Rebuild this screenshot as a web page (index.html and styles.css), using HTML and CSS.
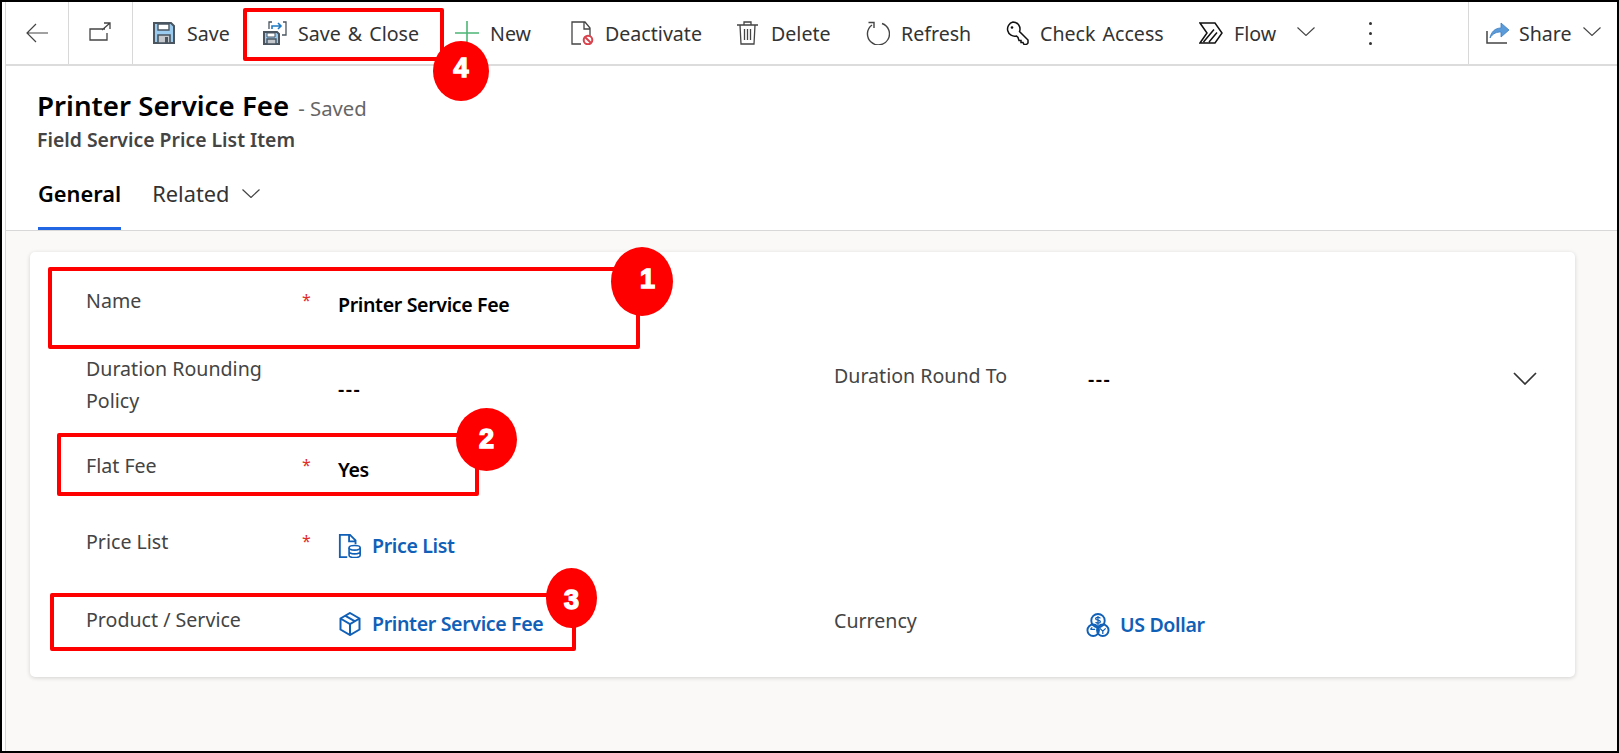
FILE: index.html
```html
<!DOCTYPE html>
<html lang="en">
  <head>
    <meta charset="UTF-8" />
    <title>Printer Service Fee - Field Service Price List Item</title>
    <link rel="stylesheet" href="styles.css">
  </head>
  <body>
    <div class="frame">
      <div class="app">
        <div class="toolbar">
          <button class="cmd cmd-nav">
            <svg class="icon" viewBox="0 0 24 24"><path d="M2 12h21M11 3l-9 9 9 9" fill="none" stroke="#444" stroke-width="1.2"/></svg>
          </button>
          <button class="cmd cmd-nav">
            <svg class="icon" viewBox="0 0 24 24"><path d="M16 8H1v11h17v-7M13 9l8-7M15 2h6v6" fill="none" stroke="#444" stroke-width="1.3"/></svg>
          </button>
          <button class="cmd cmd-first">
            <svg class="icon" viewBox="0 0 24 24"><path d="M2 2h17l3 3v17H2z" fill="#9ccbf0" stroke="#4a5560" stroke-width="2"/><path d="M6 3h11v6H6z" fill="#fff" stroke="#4a5560" stroke-width="1.4"/><path d="M6 22v-8h12v8z" fill="#c4c8cc" stroke="#4a5560" stroke-width="1.6"/><path d="M13 16h3v6h-3z" fill="#4a5560"/></svg>
            <span>Save</span>
          </button>
          <button class="cmd">
            <svg class="icon" viewBox="0 0 24 24"><path d="M1 11h13l2 2v10H1z" fill="#9ccbf0" stroke="#4a5560" stroke-width="2"/><path d="M4 12h8v4H4z" fill="#fff" stroke="#4a5560"/><path d="M4 23v-5h9v5z" fill="#c4c8cc" stroke="#4a5560" stroke-width="1.4"/><path d="M6 8V1h3M20 1h3v13h-4" fill="none" stroke="#4a5560" stroke-width="1.3"/><path d="M9 8V5h9M15 2l3 3-3 3" fill="none" stroke="#1f7ac4" stroke-width="1.6"/></svg>
            <span>Save &amp; Close</span>
          </button>
          <button class="cmd">
            <svg class="icon" viewBox="0 0 24 24"><path d="M12 0v24M0 12h24" fill="none" stroke="#4cb676" stroke-width="1.6"/></svg>
            <span>New</span>
          </button>
          <button class="cmd">
            <svg class="icon" viewBox="0 0 24 24"><path d="M11 23H2V1h13l5 6v8M14 1v7h6" fill="none" stroke="#444" stroke-width="1.3"/><circle cx="18" cy="19" r="4.3" fill="#fff" stroke="#d9434e" stroke-width="2"/><path d="M15 16l6 6" stroke="#d9434e" stroke-width="2"/></svg>
            <span>Deactivate</span>
          </button>
          <button class="cmd">
            <svg class="icon" viewBox="0 0 24 24"><path d="M1 4h21M8 4V1h7v3M4 4l1 19h13l1-19M8.500 8v11M11.500 8v11M14.500 8v11" fill="none" stroke="#444" stroke-width="1.3"/></svg>
            <span>Delete</span>
          </button>
          <button class="cmd">
            <svg class="icon" viewBox="0 0 24 24"><path d="M16 2.500a11 11 0 1 1-10 1.500" fill="none" stroke="#444" stroke-width="1.4"/><path d="M1.500 2.500H7V8" fill="none" stroke="#444" stroke-width="1.4" transform="translate(1 -1)"/></svg>
            <span>Refresh</span>
          </button>
          <button class="cmd">
            <svg class="icon" viewBox="0 0 24 24"><path d="M8 1a7 7 0 0 1 6.500 9.500l8.500 8.500v3l-1.500 1.500H19l-1-2h-2v-2h-2l-1-3-1.500-1.500A7 7 0 1 1 8 1z" fill="none" stroke="#111" stroke-width="1.5"/><circle cx="7" cy="6.500" r="1.300" fill="#111"/></svg>
            <span>Check Access</span>
          </button>
          <button class="cmd">
            <svg class="icon" viewBox="0 0 24 24"><path d="M1 2h15l7 10-7 10H1l7-10zM4.500 21L15 8.500M10 21l8-9.500" fill="none" stroke="#111" stroke-width="1.5"/></svg>
            <span>Flow</span>
            <svg class="chevron chevron-flow" viewBox="0 0 18 9"><path d="M.500.500L9 8.500 17.500.500" fill="none" stroke="#444" stroke-width="1.100"/></svg>
          </button>
          <button class="cmd cmd-more">
            <span class="dot"></span><span class="dot"></span><span class="dot"></span>
          </button>
          <button class="cmd cmd-share">
            <svg class="icon" viewBox="0 0 24 24"><path d="M1 10v12h20" fill="none" stroke="#444" stroke-width="1.5"/><path d="M4 17c1-6 5-10 11-10V2l8 7-8 7v-5c-4 0-8 1-11 6z" fill="#5b9bd9" stroke="#3d7fc0" stroke-width=".8"/></svg>
            <span>Share</span>
            <svg class="chevron chevron-share" viewBox="0 0 18 9"><path d="M.500.500L9 8.500 17.500.500" fill="none" stroke="#444" stroke-width="1.100"/></svg>
          </button>
        </div>

        <div class="record-header">
          <div class="record-title">
            <h1>Printer Service Fee</h1>
            <span class="record-status">- Saved</span>
          </div>
          <div class="record-type">Field Service Price List Item</div>
          <div class="tabs">
            <div class="tab tab-active">General</div>
            <div class="tab">
              Related
              <svg class="chevron" viewBox="0 0 18 9"><path d="M.500.500L9 8.500 17.500.500" fill="none" stroke="#444" stroke-width="1.200"/></svg>
            </div>
          </div>
        </div>

        <div class="content">
          <div class="card">
            <div class="field">
              <div class="label">Name</div>
              <div class="required">*</div>
              <div class="value">Printer Service Fee</div>
            </div>
            <div class="field"></div>

            <div class="field">
              <div class="label">Duration Rounding<br>Policy</div>
              <div class="required"></div>
              <div class="value value-mid value-dash">---</div>
            </div>
            <div class="field field-round">
              <div class="label">Duration Round To</div>
              <div class="required"></div>
              <div class="value value-select">
                <span class="value-dash">---</span>
                <svg class="chevron-select" viewBox="0 0 24 13"><path d="M1 1l11 11L23 1" fill="none" stroke="#333" stroke-width="1.700"/></svg>
              </div>
            </div>

            <div class="field">
              <div class="label">Flat Fee</div>
              <div class="required">*</div>
              <div class="value">Yes</div>
            </div>
            <div class="field"></div>

            <div class="field">
              <div class="label">Price List</div>
              <div class="required">*</div>
              <div class="value value-link">
                <svg class="link-icon" viewBox="0 0 24 26"><path d="M9 25H1V1h11l6 6v4M11 1v7h7" fill="none" stroke="#1160b7" stroke-width="2"/><ellipse cx="17" cy="15" rx="6" ry="2.500" fill="#fff" stroke="#1160b7" stroke-width="1.800"/><path d="M11 15v8c0 1.500 2.500 2.500 6 2.500s6-1 6-2.500v-8M11 19c0 1.500 2.500 2.500 6 2.500s6-1 6-2.500" fill="none" stroke="#1160b7" stroke-width="1.800"/></svg>
                <span>Price List</span>
              </div>
            </div>
            <div class="field"></div>

            <div class="field">
              <div class="label">Product / Service</div>
              <div class="required"></div>
              <div class="value value-link">
                <svg class="link-icon" viewBox="0 0 24 24"><path d="M12 1l9.500 5.500v11L12 23l-9.500-5.500v-11zM2.500 6.500L12 12l9.500-5.500M12 12v11M7.500 3.800l9.500 5.500" fill="none" stroke="#1160b7" stroke-width="2"/></svg>
                <span>Printer Service Fee</span>
              </div>
            </div>
            <div class="field field-currency">
              <div class="label">Currency</div>
              <div class="required"></div>
              <div class="value value-link">
                <svg class="link-icon" viewBox="0 0 24 25"><circle cx="12" cy="8" r="7" fill="none" stroke="#1160b7" stroke-width="2"/><circle cx="7" cy="18" r="6" fill="none" stroke="#1160b7" stroke-width="2"/><circle cx="17" cy="18" r="6" fill="none" stroke="#1160b7" stroke-width="2"/><path d="M14.500 5.500c-1-1.500-5-1.500-5 .5s5 1 5 3-4 2-5 .5M12 3v9.500M4 17h5M4 17l2-2M20 16l-3 3-3-3M17 19v3" fill="none" stroke="#1160b7" stroke-width="1.300"/></svg>
                <span>US Dollar</span>
              </div>
            </div>
          </div>
        </div>
      </div>

      <!-- callouts drawn over the screenshot -->
      <div class="callout-box box-1"></div>
      <div class="callout-box box-2"></div>
      <div class="callout-box box-3"></div>
      <div class="callout-box box-4"></div>
      <div class="callout-num num-1">1</div>
      <div class="callout-num num-2">2</div>
      <div class="callout-num num-3">3</div>
      <div class="callout-num num-4">4</div>
    </div>
  </body>
</html>
```

FILE: styles.css
```css
* {
  box-sizing: border-box;
}
body {
  margin: 0;
  font-family: "Noto Sans", "Open Sans", Arial, sans-serif;
  font-size: 19.6px;
  color: #333;
}
.frame {
  position: relative;
  width: 1619px;
  height: 753px;
  overflow: hidden;
  border: 2px solid #000;
  padding-left: 3px;
  background: #fff;
}
.app {
  height: 100%;
  display: flex;
  flex-direction: column;
  border-left: 1px solid #d8d8d8;
}

/* command bar */
.toolbar {
  display: grid;
  grid-template-columns: 63px 64px 130px 192px 115px 166px 130px 139px 194px 161px 1fr 149px;
  height: 64px;
  flex: none;
  border-bottom: 2px solid #dcdcdc;
}
.cmd {
  display: flex;
  align-items: center;
  gap: 11px;
  padding: 0;
  border: none;
  background: none;
  font: inherit;
  word-spacing: 2px;
  color: #333;
  white-space: nowrap;
}
.cmd-nav {
  justify-content: center;
  border-right: 1px solid #d8d8d8;
}
.cmd-first {
  padding-left: 19px;
}
.cmd-more {
  flex-direction: column;
  align-items: flex-start;
  justify-content: center;
  gap: 7px;
  padding-left: 9px;
}
.cmd-share {
  border-left: 1px solid #d8d8d8;
  padding-left: 17px;
  gap: 9px;
}
.dot {
  width: 3px;
  height: 3px;
  border-radius: 50%;
  background: #333;
}
.icon {
  width: 24px;
  height: 24px;
  flex: none;
}
.chevron {
  width: 18px;
  height: 9px;
  flex: none;
}
.chevron-flow {
  margin-left: 10px;
  margin-top: -3px;
}
.chevron-share {
  margin-left: 2px;
  margin-top: -3px;
}

/* record header */
.record-header {
  flex: none;
  height: 165px;
  padding: 20px 0 0 31px;
  border-bottom: 1px solid #d8d8d8;
}
.record-title {
  display: flex;
  align-items: baseline;
  gap: 9px;
  height: 36px;
}
.record-title h1 {
  margin: 0;
  font-size: 27.7px;
  font-weight: 600;
  color: #000;
}
.record-status {
  font-size: 20.3px;
  color: #666;
}
.record-type {
  margin-top: 5px;
  font-size: 19.4px;
  line-height: 26px;
  font-weight: 600;
  color: #444;
}
.tabs {
  display: flex;
  gap: 31px;
  margin-top: 19px;
  padding-left: 1px;
}
.tab {
  display: flex;
  align-items: center;
  gap: 13px;
  height: 58px;
  padding-bottom: 13px;
  border-bottom: 3px solid transparent;
  font-size: 21.800px;
  color: #333;
}
.tab-active {
  font-weight: 600;
  color: #000;
  border-bottom-color: #2266e3;
}

/* form */
.content {
  flex: 1;
  background: #faf9f8;
  padding: 21px 42px 0 24px;
}
.card {
  display: grid;
  grid-template-columns: 748px 1fr;
  grid-template-rows: 68px 97px 76px 78px 1fr;
  height: 425px;
  padding: 33px 0 0 56px;
  background: #fff;
  border-radius: 5px;
  box-shadow: 0 1px 4px rgba(0, 0, 0, 0.16);
}
.field {
  display: grid;
  grid-template-columns: 216px 36px 1fr;
  align-items: start;
  min-width: 0;
}
.field-round {
  padding-top: 7px;
  padding-right: 38px;
}
.field-currency {
  padding-top: 1px;
}
.label {
  line-height: 32px;
  color: #444;
}
.required {
  padding-top: 3px;
  font-size: 16px;
  line-height: 24px;
  color: #e02b2b;
}
.value {
  padding-top: 4px;
  line-height: 32px;
  font-weight: 600;
  letter-spacing: -0.37px;
  color: #000;
  white-space: nowrap;
}
.value-mid {
  padding-top: 20px;
}
.value-dash {
  letter-spacing: 1.5px;
}
.value-select {
  display: flex;
  align-items: center;
  justify-content: space-between;
  padding-top: 3px;
  padding-left: 2px;
}
.chevron-select {
  width: 24px;
  height: 13px;
  margin-top: -2px;
}
.value-link {
  display: flex;
  align-items: center;
  gap: 10px;
  color: #1160b7;
}
.link-icon {
  width: 24px;
  height: 24px;
  flex: none;
}

/* red callouts */
.callout-box {
  position: absolute;
  border: 4px solid #f00;
  border-radius: 2px;
}
.box-1 { left: 46px; top: 265px; width: 592px; height: 82px; }
.box-2 { left: 55px; top: 431px; width: 422px; height: 63px; }
.box-3 { left: 48px; top: 591px; width: 526px; height: 58px; }
.box-4 { left: 241px; top: 6px; width: 201px; height: 53px; }
.callout-num {
  position: absolute;
  display: flex;
  align-items: center;
  justify-content: center;
  border-radius: 50%;
  background: #f00;
  color: #fff;
  font-family: "Liberation Sans", Arial, sans-serif;
  font-size: 27px;
  font-weight: 700;
  -webkit-text-stroke: 1.5px #fff;
}
.num-1 { left: 609px; top: 245px; width: 62px; height: 69px; padding: 0 0 4px 11px; }
.num-2 { left: 454px; top: 406px; width: 61px; height: 63px; }
.num-3 { left: 544px; top: 566px; width: 51px; height: 60px; padding-top: 4px; }
.num-4 { left: 431px; top: 39px; width: 56px; height: 60px; padding-bottom: 6px; }
```
